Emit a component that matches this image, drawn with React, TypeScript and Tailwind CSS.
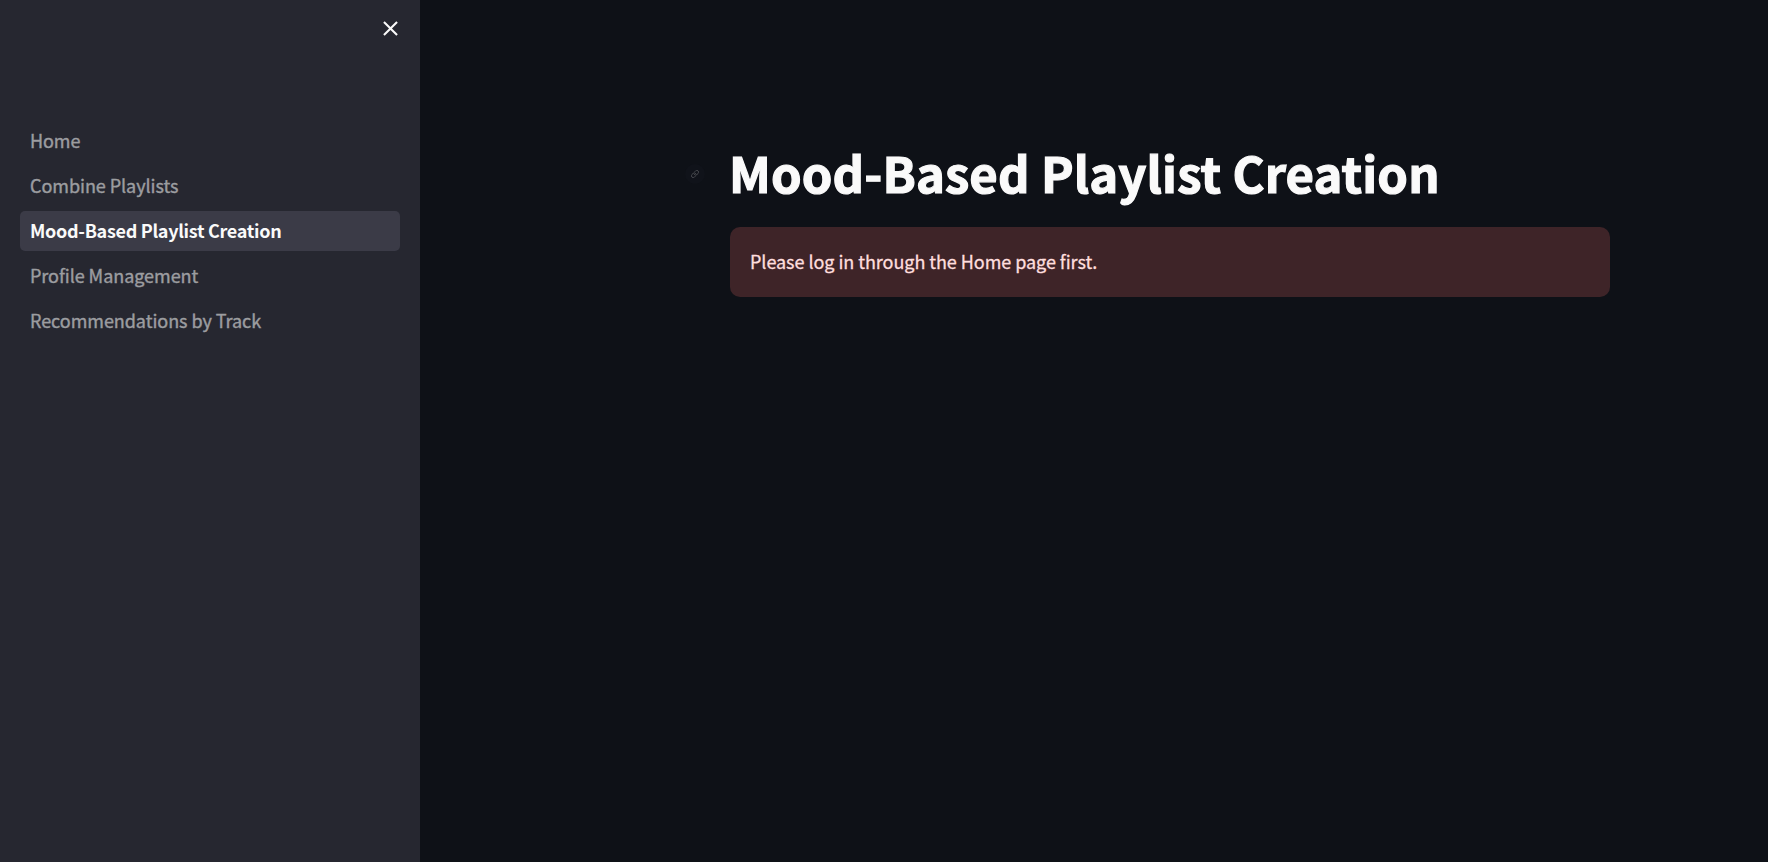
const pages = [
  { label: "Home", track: "tracking-[-0.1px]" },
  { label: "Combine Playlists", track: "tracking-[-0.05px]" },
  { label: "Mood-Based Playlist Creation", active: true, track: "tracking-[-0.3px]" },
  { label: "Profile Management", track: "tracking-[-0.05px]" },
  { label: "Recommendations by Track", track: "tracking-[-0.05px]" },
];

function Sidebar() {
  return (
    <aside className="flex w-[420px] shrink-0 flex-col bg-[#262730]">
      <div className="flex h-[121px] items-start justify-end pt-4 pr-[17px]">
        <button aria-label="Close sidebar" className="text-[#fafafa]">
          <svg width="25" height="25" viewBox="0 0 24 24" fill="currentColor">
            <path d="M19 6.41L17.59 5 12 10.59 6.41 5 5 6.41 10.59 12 5 17.59 6.41 19 12 13.41 17.59 19 19 17.59 13.41 12z" />
          </svg>
        </button>
      </div>
      <nav className="flex flex-col gap-[5px] px-5">
        {pages.map((page) => (
          <a
            key={page.label}
            className={`flex h-10 items-center rounded-[5px] px-2.5 pb-0.5 text-[18px] whitespace-nowrap ${page.track} ${
              page.active
                ? "bg-[#3b3b47] font-bold text-[#fafafa]"
                : "text-[#9c9da0] [-webkit-text-stroke:0.4px_currentColor]"
            }`}
          >
            {page.label}
          </a>
        ))}
      </nav>
    </aside>
  );
}

function AnchorLink() {
  return (
    <a className="mr-[25px] flex size-5 items-center justify-center rounded-full bg-[#10131a] text-[#5c5e62]">
      <svg width="8" height="8" viewBox="1 1 22 22" fill="none" stroke="currentColor" strokeWidth="2" strokeLinecap="round" strokeLinejoin="round">
        <path d="M10 13a5 5 0 0 0 7.54.54l3-3a5 5 0 0 0-7.07-7.07l-1.72 1.71" />
        <path d="M14 11a5 5 0 0 0-7.54-.54l-3 3a5 5 0 0 0 7.07 7.07l1.71-1.71" />
      </svg>
    </a>
  );
}

export default function App() {
  return (
    <div className="flex h-[862px] w-[1768px] overflow-hidden bg-[#0e1117] font-['Noto_Sans_CJK_JP',sans-serif]">
      <Sidebar />
      <main className="flex-1 pt-[141px] pl-[265px]">
        <div className="flex h-[66px] items-center">
          <AnchorLink />
          <h1 className="-ml-px pb-1 text-[49px] leading-[66px] font-bold tracking-[0.12px] whitespace-nowrap text-[#fafafa] [-webkit-text-stroke:1.2px_currentColor]">
            Mood-Based Playlist Creation
          </h1>
        </div>
        <div className="mt-5 ml-[45px] flex h-[70px] w-[880px] items-center rounded-[10px] bg-[#3e2428] px-5 pb-0.5 text-[18px] tracking-[-0.05px] text-[#ffdede] [-webkit-text-stroke:0.3px_currentColor]">
          Please log in through the Home page first.
        </div>
      </main>
    </div>
  );
}
